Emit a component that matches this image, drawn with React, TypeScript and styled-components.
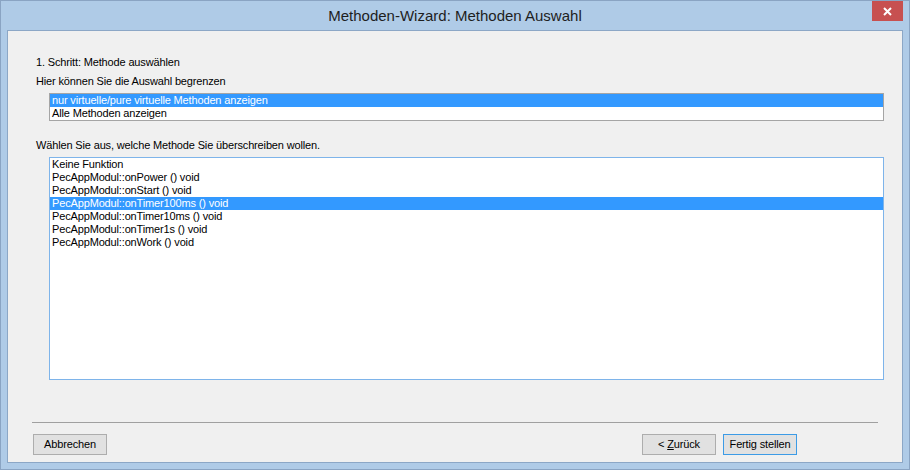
import React from "react";
import styled, { createGlobalStyle } from "styled-components";

const GlobalStyle = createGlobalStyle`
  html, body {
    margin: 0;
    padding: 0;
    background: #ffffff;
  }
  body {
    font-family: "Liberation Sans", Arial, sans-serif;
  }
  * {
    box-sizing: border-box;
  }
`;

const Window = styled.div`
  width: 910px;
  height: 470px;
  display: flex;
  flex-direction: column;
  border: 1px solid #8aa4c3;
  background: #afcbe7;
  padding: 0 6px 6px 6px;
`;

const TitleBar = styled.div`
  height: 29px;
  display: grid;
  grid-template-columns: 1fr auto 1fr;
  align-items: center;
`;

const Title = styled.div`
  grid-column: 2;
  font-family: "Liberation Sans", Arial, sans-serif;
  font-size: 15px;
  color: #1e1e1e;
  white-space: nowrap;
  padding-bottom: 1px;
`;

const CloseButton = styled.div`
  grid-column: 3;
  justify-self: end;
  align-self: start;
  width: 31px;
  height: 20px;
  background: #c75050;
  display: flex;
  align-items: center;
  justify-content: center;
`;

const Client = styled.div`
  flex: 1;
  display: flex;
  flex-direction: column;
  border: 1px solid #8ca7c6;
  background: #f0f0f0;
  padding: 25px 18px 7px 28px;
  letter-spacing: -0.15px;
`;

const Label = styled.div<{ $gap?: number }>`
  font-size: 11px;
  line-height: 13px;
  height: 13px;
  color: #000;
  white-space: nowrap;
  margin-top: ${(p) => p.$gap ?? 0}px;
`;

const ListBox = styled.div<{ $height: number; $focused?: boolean }>`
  margin: 5px 0 0 13px;
  height: ${(p) => p.$height}px;
  background: #ffffff;
  border: 1px solid ${(p) => (p.$focused ? "#7eb4ea" : "#a5a5a5")};
  overflow: hidden;
`;

const ListItem = styled.div<{ $selected?: boolean }>`
  height: 13px;
  line-height: 13px;
  font-size: 11px;
  padding-left: 2px;
  white-space: nowrap;
  color: ${(p) => (p.$selected ? "#ffffff" : "#000000")};
  background: ${(p) => (p.$selected ? "#3399ff" : "transparent")};
`;

const Separator = styled.div`
  margin: 42px 6px 0 -4px;
  height: 1px;
  background: #a0a0a0;
`;

const ButtonRow = styled.div`
  margin: 11px 87px 0 -3px;
  display: flex;
  align-items: center;
  gap: 7px;
`;

const Spacer = styled.div`
  flex: 1;
`;

const Button = styled.div<{ $default?: boolean }>`
  width: 74px;
  height: 21px;
  display: flex;
  align-items: center;
  justify-content: center;
  font-size: 11px;
  color: #000;
  background: #e1e1e1;
  border: 1px solid ${(p) => (p.$default ? "#3c9be6" : "#adadad")};
  padding-bottom: 1px;
  white-space: pre;
`;

const Mnemonic = styled.span`
  text-decoration: underline;
`;

const filterOptions = [
  "nur virtuelle/pure virtuelle Methoden anzeigen",
  "Alle Methoden anzeigen",
];

const methods = [
  "Keine Funktion",
  "PecAppModul::onPower () void",
  "PecAppModul::onStart () void",
  "PecAppModul::onTimer100ms () void",
  "PecAppModul::onTimer10ms () void",
  "PecAppModul::onTimer1s () void",
  "PecAppModul::onWork () void",
];

export default function App() {
  return (
    <>
      <GlobalStyle />
      <Window>
        <TitleBar>
          <Title>Methoden-Wizard: Methoden Auswahl</Title>
          <CloseButton>
            <svg width="9" height="9" viewBox="0 0 9 9">
              <path d="M1 1 L8 8 M8 1 L1 8" stroke="#ffffff" strokeWidth="2" />
            </svg>
          </CloseButton>
        </TitleBar>
        <Client>
          <Label>1. Schritt: Methode auswählen</Label>
          <Label $gap={6}>Hier können Sie die Auswahl begrenzen</Label>
          <ListBox $height={28}>
            {filterOptions.map((o, i) => (
              <ListItem key={o} $selected={i === 0}>
                {o}
              </ListItem>
            ))}
          </ListBox>
          <Label $gap={18}>Wählen Sie aus, welche Methode Sie überschreiben wollen.</Label>
          <ListBox $height={223} $focused>
            {methods.map((m, i) => (
              <ListItem key={m} $selected={i === 3}>
                {m}
              </ListItem>
            ))}
          </ListBox>
          <Separator />
          <ButtonRow>
            <Button>Abbrechen</Button>
            <Spacer />
            <Button>
              <span>
                {"< "}
                <Mnemonic>Z</Mnemonic>
                {"urück"}
              </span>
            </Button>
            <Button $default>Fertig stellen</Button>
          </ButtonRow>
        </Client>
      </Window>
    </>
  );
}
